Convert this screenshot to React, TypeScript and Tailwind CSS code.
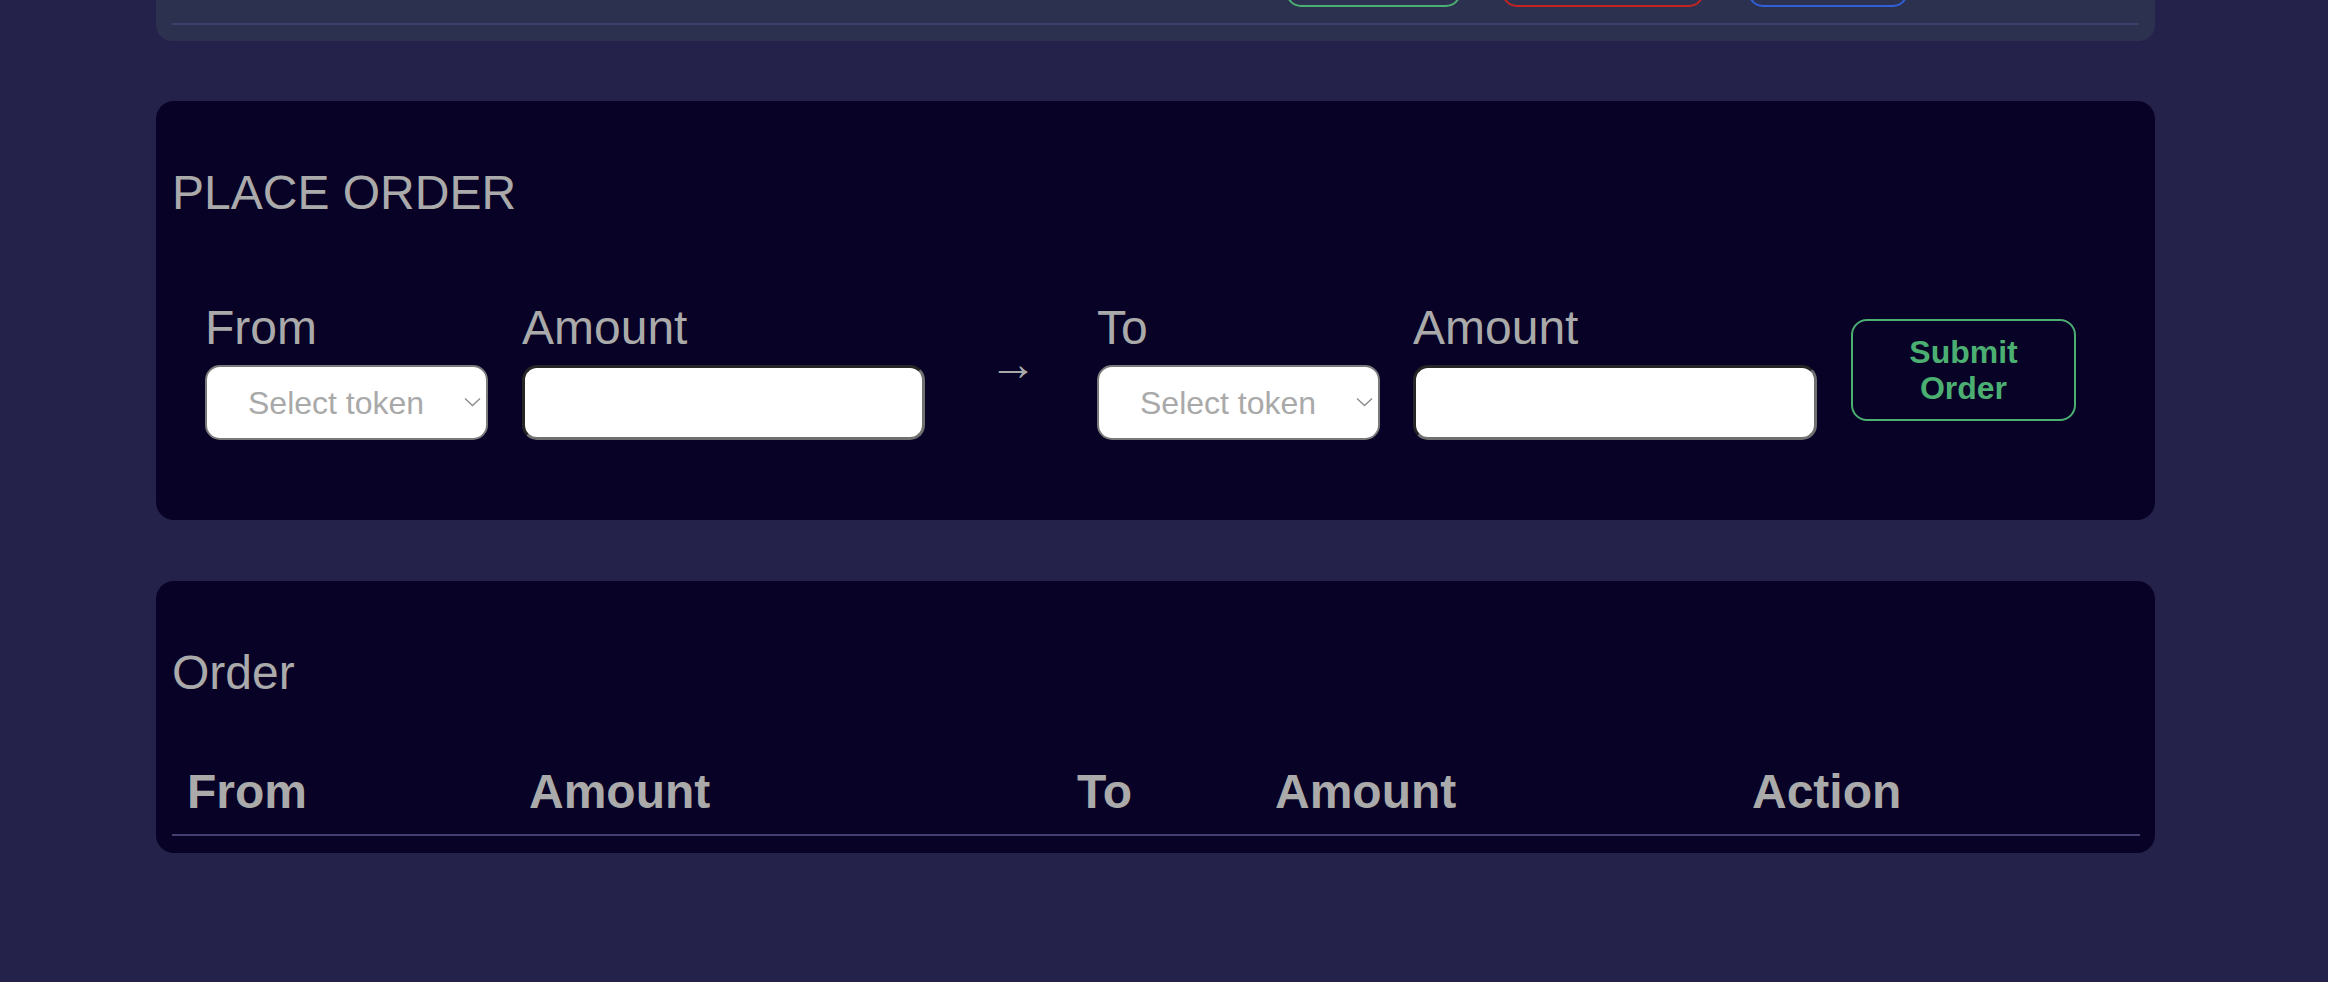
import React from "react"

function TokenSelect() {
  return (
    <div className="relative w-[283px] h-[75px]">
      <select
        defaultValue=""
        className="appearance-none w-full h-full rounded-[15px] border-2 border-solid border-[#7a7a7a] bg-white pl-[41px] text-[32px] text-[#a9a9a9] outline-none"
      >
        <option value="" disabled>
          Select token
        </option>
        <option value="eth">ETH</option>
        <option value="usdc">USDC</option>
      </select>
      <svg
        className="pointer-events-none absolute right-[7px] top-[32px]"
        width="17"
        height="10"
        viewBox="0 0 17 10"
        fill="none"
      >
        <path d="M1 1.5 L8.5 8.5 L16 1.5" stroke="#8a8a8a" strokeWidth="1.3" />
      </svg>
    </div>
  )
}

function AmountInput({ width }: { width: string }) {
  return (
    <input
      type="text"
      className={`${width} h-[75px] rounded-[15px] border-[3px] border-t-[#262626] border-l-[#262626] border-r-[#707070] border-b-[#707070] bg-white px-3 text-[32px] text-black outline-none`}
    />
  )
}

function Field({ label, children }: { label: string; children: React.ReactNode }) {
  return (
    <div className="flex flex-col">
      <label className="text-[48px] leading-[55px] text-[#aaaaaa]">{label}</label>
      <div className="mt-[10px]">{children}</div>
    </div>
  )
}

export default function App() {
  const headers = [
    { name: "From", w: "w-[342px]" },
    { name: "Amount", w: "w-[548px]" },
    { name: "To", w: "w-[198px]" },
    { name: "Amount", w: "w-[477px]" },
    { name: "Action", w: "w-[403px]" },
  ]

  return (
    <div className="min-h-screen overflow-hidden bg-[#24224a] font-['Liberation_Sans',Arial,sans-serif]">
      <div className="ml-[156px] w-[1999px] pb-[120px]">
        {/* balance panel, scrolled mostly out of view */}
        <div className="-mt-[53px] rounded-[16px] bg-[#2d3150] px-[16px] pb-[16px]">
          <div className="flex h-[60px]">
            <button className="ml-[1114px] w-[175px] rounded-[15px] border-2 border-[#4caf72]" />
            <button className="ml-[41px] w-[202px] rounded-[15px] border-2 border-[#c42420]" />
            <button className="ml-[44px] w-[160px] rounded-[15px] border-2 border-[#2f60d6]" />
          </div>
          <div className="mt-[16px] h-[2px] bg-[#3e3d6c]" />
        </div>

        {/* place order */}
        <div className="mt-[60px] rounded-[18px] bg-[#070226] px-[16px] pt-[64px] pb-[80px]">
          <h1 className="text-[48px] leading-[55px] text-[#aaaaaa]">PLACE ORDER</h1>
          <div className="mt-[80px] flex items-center pl-[33px]">
            <Field label="From">
              <TokenSelect />
            </Field>
            <div className="ml-[34px]">
              <Field label="Amount">
                <AmountInput width="w-[403px]" />
              </Field>
            </div>
            <span className="ml-[64px] mb-[12px] w-[42px] text-[48px] leading-none text-[#aaaaaa]">→</span>
            <div className="ml-[66px]">
              <Field label="To">
                <TokenSelect />
              </Field>
            </div>
            <div className="ml-[33px]">
              <Field label="Amount">
                <AmountInput width="w-[404px]" />
              </Field>
            </div>
            <button className="ml-[34px] h-[102px] w-[225px] rounded-[16px] border-2 border-[#4caf72] text-[32px] font-bold leading-[36px] text-[#4caf72]">
              Submit
              <br />
              Order
            </button>
          </div>
        </div>

        {/* orders */}
        <div className="mt-[61px] rounded-[18px] bg-[#070226] px-[16px] pt-[64px] pb-[17px]">
          <h1 className="text-[48px] leading-[55px] text-[#aaaaaa]">Order</h1>
          <table className="mt-[49px] w-[1968px] table-fixed border-collapse">
            <thead>
              <tr className="border-b-2 border-[#433f6e]">
                {headers.map((h, i) => (
                  <th
                    key={i}
                    className={`${h.w} px-[15px] py-[15px] text-left text-[48px] font-bold leading-[55px] text-[#aaaaaa]`}
                  >
                    {h.name}
                  </th>
                ))}
              </tr>
            </thead>
            <tbody />
          </table>
        </div>
      </div>
    </div>
  )
}
